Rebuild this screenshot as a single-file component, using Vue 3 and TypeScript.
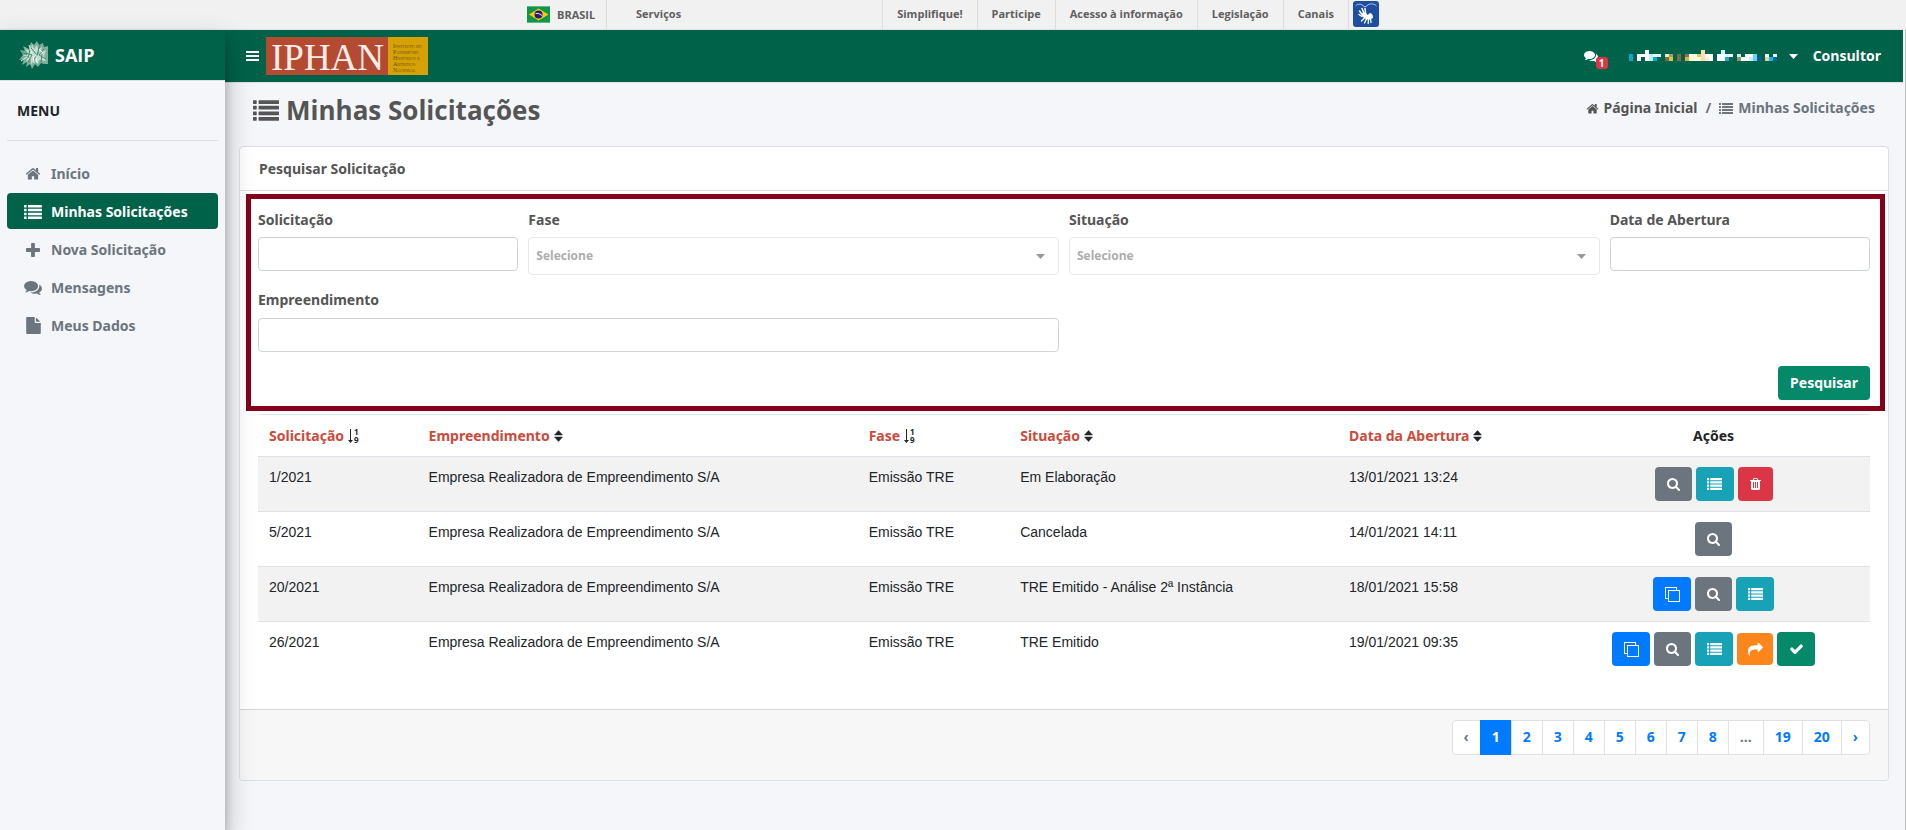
<script setup lang="ts">
import { ref } from 'vue'

type IconName = 'home' | 'list' | 'plus' | 'comments' | 'file' | 'search' | 'trash' | 'check' | 'share' | 'clone'

interface Glyph { box: string; d: string }

const bar = (y: number) => `M32 ${y}h192q32 0 32 32v192q0 32-32 32h-192q-32 0-32-32v-192q0-32 32-32zM416 ${y}h1344q32 0 32 32v192q0 32-32 32h-1344q-32 0-32-32v-192q0-32 32-32z`

const glyphs: Record<IconName, Glyph> = {
  home: { box: '-60 180 1784 1356', d: 'M1408 992v480q0 26-19 45t-45 19h-384v-384h-256v384h-384q-26 0-45-19t-19-45v-480q0-1 .5-3t.5-3l575-474 575 474q1 2 1 6zm223-69l-62 74q-8 9-21 11h-3q-13 0-21-7l-692-577-692 577q-12 8-24 7-13-2-21-11l-62-74q-8-10-7-23.5t11-21.5l719-599q32-26 76-26t76 26l244 204v-195q0-14 9-23t23-9h192q14 0 23 9t9 23v408l219 182q10 8 11 21.5t-7 23.5z' },
  list: { box: '0 128 1792 1408', d: [128, 512, 896, 1280].map(bar).join('') },
  plus: { box: '192 128 1408 1408', d: 'M1600 736v192q0 40-28 68t-68 28h-416v416q0 40-28 68t-68 28h-192q-40 0-68-28t-28-68v-416h-416q-40 0-68-28t-28-68v-192q0-40 28-68t68-28h416v-416q0-40 28-68t68-28h192q40 0 68 28t28 68v416h416q40 0 68 28t28 68z' },
  comments: { box: '0 256 1792 1408', d: 'M1408 768q0 139-94 257t-256.5 186.5-353.5 68.5q-86 0-176-16-124 88-278 128-36 9-86 16h-3q-11 0-20.5-8t-11.5-21q-1-3-1-6.5t.5-6.5 2-6l2.5-5 3.5-5.5 4-5 4.5-5 4-4.5q5-6 23-25t26-29.5 22.5-29 25-38.5 20.5-44q-124-72-195-177t-71-224q0-139 94-257t256.5-186.5 353.5-68.5 353.5 68.5 256.5 186.5 94 257zm384 256q0 120-71 224.5t-195 176.5q10 24 20.5 44t25 38.5 22.5 29 26 29.5 23 25q1 1 4 4.5t4.5 5 4 5 3.5 5.5l2.5 5 2 6 .5 6.5-1 6.5q-3 14-13 22t-22 7q-50-7-86-16-154-40-278-128-90 16-176 16-271 0-472-132 58 4 88 4 161 0 309-45t264-129q125-92 192-212t67-254q0-77-23-152 129 71 204 178t75 230z' },
  file: { box: '0 0 1536 1792', d: 'M1024 512v-472q22 14 36 28l408 408q14 14 28 36h-472zm-128 32q0 40 28 68t68 28h544v1056q0 40-28 68t-68 28h-1344q-40 0-68-28t-28-68v-1600q0-40 28-68t68-28h800v544z' },
  search: { box: '0 0 1664 1664', d: 'M1152 704q0-185-131.5-316.5t-316.5-131.5-316.5 131.5-131.5 316.5 131.5 316.5 316.5 131.5 316.5-131.5 131.5-316.5zm512 832q0 52-38 90t-90 38q-54 0-90-38l-343-342q-179 124-399 124-143 0-273.5-55.5t-225-150-150-225-55.5-273.5 55.5-273.5 150-225 225-150 273.5-55.5 273.5 55.5 225 150 150 225 55.5 273.5q0 220-124 399l343 343q37 37 37 90z' },
  trash: { box: '192 128 1408 1536', d: 'M704 1376v-704q0-14-9-23t-23-9h-64q-14 0-23 9t-9 23v704q0 14 9 23t23 9h64q14 0 23-9t9-23zm256 0v-704q0-14-9-23t-23-9h-64q-14 0-23 9t-9 23v704q0 14 9 23t23 9h64q14 0 23-9t9-23zm256 0v-704q0-14-9-23t-23-9h-64q-14 0-23 9t-9 23v704q0 14 9 23t23 9h64q14 0 23-9t9-23zm-544-992h448l-48-117q-7-9-17-11h-317q-10 2-17 11zm928 32v64q0 14-9 23t-23 9h-96v948q0 83-47 143.5t-113 60.5h-832q-66 0-113-58.5t-47-141.5v-952h-96q-14 0-23-9t-9-23v-64q0-14 9-23t23-9h309l70-167q15-37 54-63t79-26h320q40 0 79 26t54 63l70 167h309q14 0 23 9t9 23z' },
  check: { box: '120 300 1552 1190', d: 'M1671 566q0 40-28 68l-724 724-136 136q-28 28-68 28t-68-28l-136-136-362-362q-28-28-28-68t28-68l136-136q28-28 68-28t68 28l294 295 656-657q28-28 68-28t68 28l136 136q28 28 28 68z' },
  share: { box: '0 128 1792 1536', d: 'M1792 640q0 26-19 45l-512 512q-19 19-45 19t-45-19-19-45v-256h-224q-98 0-175.5 6t-154 21.5-133 42.5-105.5 69.5-80 101-48.5 138.5-17.5 181q0 55 5 123 0 6 2.5 23.5t2.5 26.5q0 15-8.5 25t-23.5 10q-16 0-28-17-7-9-13-22t-13.5-30-10.5-24q-127-285-127-451 0-199 53-333 162-403 875-403h224v-256q0-26 19-45t45-19 45 19l512 512q19 19 19 45z' },
  clone: { box: '0 0 15 15', d: 'M0 0h12v3h3v12h-12v-3h-3zM1 1v10h2v-8h8v-2zM4 4v10h10v-10z' },
}

const menu: { label: string; icon: IconName; active?: boolean }[] = [
  { label: 'Início', icon: 'home' },
  { label: 'Minhas Solicitações', icon: 'list', active: true },
  { label: 'Nova Solicitação', icon: 'plus' },
  { label: 'Mensagens', icon: 'comments' },
  { label: 'Meus Dados', icon: 'file' },
]

const govLinks = ['Simplifique!', 'Participe', 'Acesso à informação', 'Legislação', 'Canais']

type Order = 'numeric' | 'both'
const columns: { label: string; order: Order; key: string }[] = [
  { label: 'Solicitação', order: 'numeric', key: 'c-id' },
  { label: 'Empreendimento', order: 'both', key: 'c-emp' },
  { label: 'Fase', order: 'numeric', key: 'c-fase' },
  { label: 'Situação', order: 'both', key: 'c-sit' },
  { label: 'Data da Abertura', order: 'both', key: 'c-data' },
]

type Action = 'copiar' | 'ver' | 'listar' | 'excluir' | 'encaminhar' | 'confirmar'
const actions: Record<Action, { icon: IconName; label: string }> = {
  copiar: { icon: 'clone', label: 'Copiar' },
  ver: { icon: 'search', label: 'Visualizar' },
  listar: { icon: 'list', label: 'Detalhar' },
  excluir: { icon: 'trash', label: 'Excluir' },
  encaminhar: { icon: 'share', label: 'Encaminhar' },
  confirmar: { icon: 'check', label: 'Confirmar' },
}

const rows: { id: string; sit: string; data: string; acts: Action[] }[] = [
  { id: '1/2021', sit: 'Em Elaboração', data: '13/01/2021 13:24', acts: ['ver', 'listar', 'excluir'] },
  { id: '5/2021', sit: 'Cancelada', data: '14/01/2021 14:11', acts: ['ver'] },
  { id: '20/2021', sit: 'TRE Emitido - Análise 2ª Instância', data: '18/01/2021 15:58', acts: ['copiar', 'ver', 'listar'] },
  { id: '26/2021', sit: 'TRE Emitido', data: '19/01/2021 09:35', acts: ['copiar', 'ver', 'listar', 'encaminhar', 'confirmar'] },
]

const pages = ['‹', '1', '2', '3', '4', '5', '6', '7', '8', '...', '19', '20', '›']
const page = ref('1')
const solicitacao = ref('')
const fase = ref('')
const situacao = ref('')
const abertura = ref('')
const empreendimento = ref('')

// Mosaic that hides the user name: [column, row, colour], each tile 4px wide.
const mosaic: [number, number, string][] = [
  [0, 1, '#0aa5d2'], [0, 2, '#0aa5d2'],
  [2, 1, '#ffffff'], [2, 2, '#ffffff'], [3, 1, '#ffffff'], [4, 0, '#ffffff'], [4, 1, '#ffffff'], [4, 2, '#ffffff'],
  [5, 1, '#b9f1fb'], [5, 2, '#b9f1fb'], [6, 1, '#e2fbff'], [6, 2, '#0aa5d2'], [7, 1, '#dff3ee'],
  [9, 1, '#dfe9e4'], [9, 2, '#7c6a45'], [10, 1, '#b49a45'], [10, 2, '#d8c34a'],
  [12, 1, '#7c6a4c'], [12, 2, '#7c6a4c'],
  [14, 1, '#9b6b45'], [14, 2, '#d9b14c'], [15, 1, '#ffffff'], [15, 2, '#fdf9d8'], [16, 1, '#fdf9d8'], [16, 2, '#fdf9d8'],
  [17, 1, '#d9c778'], [17, 2, '#fffbe0'], [18, 0, '#fcdcae'], [18, 1, '#fcdcae'], [18, 2, '#fcdcae'],
  [19, 1, '#ffffff'], [19, 2, '#fdebcb'], [20, 1, '#ffffff'], [20, 2, '#ffffff'],
  [22, 1, '#ffffff'], [22, 2, '#ffffff'], [23, 0, '#c9f5fd'], [23, 1, '#ffffff'], [23, 2, '#ffffff'],
  [24, 1, '#d2f6fc'], [24, 2, '#1ba9d0'], [25, 1, '#ffffff'],
  [27, 1, '#dff0ea'], [27, 2, '#8b9a68'], [28, 2, '#ffffff'], [29, 1, '#ffffff'], [29, 2, '#ffffff'], [30, 1, '#ffffff'], [30, 2, '#c4f3fb'],
  [31, 1, '#6cd0f3'], [31, 2, '#6cd0f3'], [32, 2, '#0a609b'],
  [34, 1, '#ffffff'], [34, 2, '#eccf9c'], [35, 2, '#0fc0dc'], [36, 1, '#e4fbff'], [36, 2, '#0a609b'],
]
</script>

<template>
  <div class="page">
    <div class="gov">
      <nav class="gov-inner" aria-label="Barra do governo">
        <a class="gov-brasil" href="#">
          <svg viewBox="0 0 23 17" width="23" height="17" aria-hidden="true">
            <rect width="23" height="17" fill="#119548" />
            <rect width="23" height="1" fill="#5cba83" />
            <rect y="16" width="23" height="1" fill="#5cba83" />
            <path d="M2 8.500L11.500 2.500L21.500 8.500L11.500 14.500z" fill="#f8cb0b" />
            <circle cx="11.500" cy="8.500" r="4" fill="#2b1b79" />
            <path d="M8.500 7.400Q12 6.800 15 9.500" stroke="#dfe3f5" fill="none" />
          </svg>
          BRASIL
        </a>
        <a class="gov-serv" href="#">Serviços</a>
        <a v-for="l in govLinks" :key="l" class="gov-link" href="#">{{ l }}</a>
        <a class="gov-libras" href="#" aria-label="VLibras">
          <svg viewBox="0 0 26 26" width="26" height="26" aria-hidden="true">
            <rect width="26" height="26" rx="3" fill="#1d4f9e" />
            <path d="M2.500 5Q4 2.500 8 3.200L12 6L16 3.200Q21 2 23.500 5" fill="none" stroke="#a8c4ea" stroke-width="1" />
            <path d="M9.500 14L6.500 10M11 12.500L9 7.500M12.500 12L12 7.500M9 15.500L6 13.500" stroke="#fff" stroke-width="1.500" stroke-linecap="round" />
            <path d="M9 12Q13 10.500 14.500 14L17 12Q20 12.500 20 17L18 18Q15 20 11 17Q8.500 15 9 12z" fill="#fff" />
            <path d="M11.500 17L8.500 20M13.500 18L11.500 22M15.500 18.500L15.200 22.500M17.500 17.500L18 21.500" stroke="#fff" stroke-width="1.300" stroke-linecap="round" />
          </svg>
        </a>
      </nav>
    </div>

    <div class="shell">
      <aside class="side">
        <a class="brand" href="#">
          <svg viewBox="0 0 30 28" width="30" height="28" aria-hidden="true">
            <path d="M12 1L15 4L18 0L20 4L24 2L25 6L29 5V23L25 23L22 22L19 26L16 23L13 28L11 23L7 26L8 21L3 24L5 18L0 19L4 14L1 9L6 10L4 5L10 8z" fill="#7fae9d" />
            <path d="M13 3L15 8L18 4L19 9L23 6L22 11L27 9L25 15L27 20L20 19L19 23L15 19L12 24L12 18L7 21L9 15L4 15L9 12L6 8L12 10z" fill="#c6dcd3" />
            <path d="M12 7L17 13M21 4L17 17M25 8L20 14L27 18M6 12L13 14L9 21M14 20L20 11M23 13L22 21M3 11L8 14M11 9L9 17" stroke="#3f8a70" stroke-width="1" fill="none" />
            <path d="M2 20L8 16M10 4L13 12M17 14L18 22M20 8L24 12M14 15L15 22" stroke="#eef6f2" stroke-width="1" fill="none" />
          </svg>
          SAIP
        </a>
        <h2 class="side-title">MENU</h2>
        <nav class="side-nav" aria-label="Menu">
          <a v-for="m in menu" :key="m.label" href="#" :class="['side-link', { active: m.active }]">
            <span class="side-ico">
              <svg :class="'m-' + m.icon" :viewBox="glyphs[m.icon].box" aria-hidden="true"><path :d="glyphs[m.icon].d" fill="currentColor" /></svg>
            </span>
            {{ m.label }}
          </a>
        </nav>
      </aside>

      <div class="main">
        <header class="top">
          <button class="burger" type="button" aria-label="Alternar menu">
            <svg viewBox="0 0 13 10" width="13" height="10" aria-hidden="true"><path d="M0 0h13v2H0zM0 4h13v2H0zM0 8h13v2H0z" fill="currentColor" /></svg>
          </button>
          <svg viewBox="0 -5 162 48" width="162" height="48" role="img" aria-label="IPHAN">
            <rect width="122" height="38" fill="#b44a32" />
            <rect x="122" width="40" height="38" fill="#d5a106" />
            <text x="5" y="33" class="iphan-big">IPHAN</text>
            <g class="iphan-small">
              <text x="127" y="11">Instituto do</text>
              <text x="127" y="17">Patrimônio</text>
              <text x="127" y="23">Histórico e</text>
              <text x="127" y="29">Artístico</text>
              <text x="127" y="35">Nacional</text>
            </g>
          </svg>
          <div class="top-right">
            <a class="msgs" href="#" aria-label="Mensagens">
              <svg :viewBox="glyphs.comments.box" width="14" height="11" aria-hidden="true"><path :d="glyphs.comments.d" fill="currentColor" /></svg>
              <span class="badge">1</span>
            </a>
            <button class="user" type="button" aria-label="Usuário">
              <svg viewBox="0 0 152 13" width="152" height="13" shape-rendering="crispEdges" aria-hidden="true">
                <rect v-for="(t, i) in mosaic" :key="i" :x="t[0] * 4" :y="[0, 4, 7][t[1]]" width="4" :height="[4, 3, 4][t[1]]" :fill="t[2]" />
              </svg>
              <svg viewBox="0 0 9 5" width="9" height="5" aria-hidden="true"><path d="M0 0h9L4.500 5z" fill="currentColor" /></svg>
            </button>
            <span class="role">Consultor</span>
          </div>
        </header>

        <div class="heading">
          <h1>
            <svg :viewBox="glyphs.list.box" width="26" height="21" aria-hidden="true"><path :d="glyphs.list.d" fill="currentColor" /></svg>
            Minhas Solicitações
          </h1>
          <nav class="crumbs" aria-label="Trilha">
            <a href="#"><svg :viewBox="glyphs.home.box" width="13" height="11" aria-hidden="true"><path :d="glyphs.home.d" fill="currentColor" /></svg>Página Inicial</a>
            <span class="slash">/</span>
            <span class="here"><svg :viewBox="glyphs.list.box" width="14" height="11" aria-hidden="true"><path :d="glyphs.list.d" fill="currentColor" /></svg>Minhas Solicitações</span>
          </nav>
        </div>

        <section class="card">
          <h3 class="card-head">Pesquisar Solicitação</h3>
          <form class="search" @submit.prevent>
            <div class="f2"><label for="sol">Solicitação</label><input id="sol" v-model="solicitacao" type="text"></div>
            <div class="f4">
              <label for="fase">Fase</label>
              <span class="sel">
                <select id="fase" v-model="fase"><option value="">Selecione</option><option>Emissão TRE</option></select>
                <svg viewBox="0 0 9 5" width="9" height="5" aria-hidden="true"><path d="M0 0h9L4.500 5z" fill="currentColor" /></svg>
              </span>
            </div>
            <div class="f4">
              <label for="sit">Situação</label>
              <span class="sel">
                <select id="sit" v-model="situacao"><option value="">Selecione</option><option v-for="r in rows" :key="r.sit">{{ r.sit }}</option></select>
                <svg viewBox="0 0 9 5" width="9" height="5" aria-hidden="true"><path d="M0 0h9L4.500 5z" fill="currentColor" /></svg>
              </span>
            </div>
            <div class="f2"><label for="abe">Data de Abertura</label><input id="abe" v-model="abertura" type="text"></div>
            <div class="f6"><label for="emp">Empreendimento</label><input id="emp" v-model="empreendimento" type="text"></div>
            <div class="f12"><button class="go" type="submit">Pesquisar</button></div>
          </form>

          <div class="table-wrap">
            <table>
              <thead>
                <tr>
                  <th v-for="c in columns" :key="c.key" :class="c.key" scope="col">
                    <span class="th-in">
                      <a href="#">{{ c.label }}</a>
                      <svg v-if="c.order === 'both'" viewBox="0 0 9 12" width="9" height="12" aria-hidden="true">
                        <path d="M4.500 0.500L8.500 5H0.500zM4.500 11.500L8.500 7H0.500z" fill="currentColor" stroke="currentColor" stroke-linejoin="round" stroke-width="0.500" />
                      </svg>
                      <svg v-else class="num" viewBox="0 0 13 20" width="13" height="20" aria-hidden="true">
                        <path d="M2 3h1v11h2L2.500 17L0 14H2z" fill="currentColor" />
                        <text x="6" y="9">1</text>
                        <text x="6" y="17">9</text>
                      </svg>
                    </span>
                  </th>
                  <th class="c-act" scope="col">Ações</th>
                </tr>
              </thead>
              <tbody>
                <tr v-for="r in rows" :key="r.id">
                  <td>{{ r.id }}</td>
                  <td>Empresa Realizadora de Empreendimento S/A</td>
                  <td>Emissão TRE</td>
                  <td>{{ r.sit }}</td>
                  <td>{{ r.data }}</td>
                  <td>
                    <div class="acts">
                      <button v-for="a in r.acts" :key="a" type="button" :class="['act', a]" :aria-label="actions[a].label">
                        <svg :viewBox="glyphs[actions[a].icon].box" aria-hidden="true"><path :d="glyphs[actions[a].icon].d" fill="currentColor" fill-rule="evenodd" /></svg>
                      </button>
                    </div>
                  </td>
                </tr>
              </tbody>
            </table>
          </div>

          <footer class="card-foot">
            <nav class="pager" aria-label="Paginação">
              <button v-for="p in pages" :key="p" type="button" :class="{ on: p === page, off: p === '‹' || p === '...' }" @click="page = p">{{ p }}</button>
            </nav>
          </footer>
        </section>
      </div>
    </div>
  </div>
</template>

<style>
body { margin: 0; background: #f4f6f9; }
</style>

<style scoped>
*, *::before, *::after { box-sizing: border-box; }
.page {
  min-height: 100vh; display: flex; flex-direction: column;
  background: #f4f6f9; color: #212529;
  font: 700 14px/20px "Open Sans", "Noto Sans", sans-serif;
}
a { color: inherit; text-decoration: none; }
button, input, select { font: inherit; margin: 0; }
svg { display: block; flex: none; }
h1, h2, h3 { margin: 0; font: inherit; }

.gov { height: 30px; background: #f1f1f1; border-bottom: 1px solid #dde3e0; color: #606060; font-size: 11px; }
.gov-inner { width: 852px; height: 29px; margin: 0 auto; display: flex; align-items: stretch; line-height: 28px; }
.gov-brasil { width: 80px; display: flex; align-items: center; gap: 7px; border-right: 1px solid #dcdcdc; }
.gov-serv { flex: 1; padding-left: 29px; }
.gov-link { padding: 0 14px; border-left: 1px solid #dcdcdc; white-space: nowrap; }
.gov-libras { padding: 1px 0 0 4px; border-left: 1px solid #dcdcdc; }

.shell { flex: 1; display: flex; align-items: stretch; }
.side { width: 225px; flex: none; background: #f4f6f9; box-shadow: 0 14px 28px rgba(0, 0, 0, .25), 0 10px 10px rgba(0, 0, 0, .22); z-index: 2; }
.brand { height: 51px; padding-left: 19px; display: flex; align-items: center; gap: 6px; background: #01624a; border-bottom: 1px solid #dee2e6; color: #fff; font-size: 18px; }
.side-title, .side-link, .crumbs, .card-head, .search label, th { font-family: "Noto Sans", "Open Sans", sans-serif; font-weight: 700; }
.side-title { margin: 0 7px 14px; padding: 20px 10px 19px; border-bottom: 1px solid #dcdfe2; color: #212529; }
.side-nav { display: flex; flex-direction: column; gap: 2px; padding: 0 7px; }
.side-link { height: 36px; padding-top: 1px; display: flex; align-items: center; border-radius: 4px; color: #6c757d; }
.side-link.active { background: #01624a; color: #fff; }
.side-ico { width: 36px; margin-left: 8px; display: flex; justify-content: center; }
.m-home { width: 16px; height: 13px; }
.m-list { width: 18px; height: 14px; }
.m-plus { width: 14px; height: 14px; }
.m-comments { width: 18px; height: 14px; }
.m-file { width: 15px; height: 17px; }

.main { flex: 1; min-width: 0; padding-bottom: 48px; border-right: 1px solid #bdbdbd; }
.top { height: 53px; margin-right: 2px; display: flex; align-items: center; background: #01624a; border-bottom: 1px solid #dee2e6; color: #fff; }
.burger { width: 41px; padding: 0 0 0 21px; border: 0; background: none; color: #fff; }
.iphan-big { font: 400 37px "Liberation Serif", serif; fill: #fbeee8; }
.iphan-small { font: 400 6px "Liberation Serif", serif; font-variant: small-caps; fill: #6e5212; }
.top-right { margin-left: auto; padding-right: 22px; display: flex; align-items: center; }
.msgs { position: relative; margin-right: 31px; }
.badge { position: absolute; left: 12px; top: 6px; width: 12px; height: 12px; border-radius: 3px; background: #dc3545; font-size: 10px; line-height: 12px; text-align: center; }
.user { display: flex; align-items: center; gap: 8px; padding: 0; margin-right: 15px; border: 0; background: none; color: #fff; }

.heading { display: flex; justify-content: space-between; padding: 8px 30px 17px 28px; }
.heading h1 { display: flex; align-items: center; gap: 7px; font-size: 26px; line-height: 38px; color: #555; }
.crumbs { display: flex; align-items: center; height: 34px; color: #6c757d; }
.crumbs a, .here { display: flex; align-items: center; gap: 5px; }
.crumbs a { color: #555; }
.slash { padding: 0 8px; }

.card { margin: 0 16px 0 14px; border: 1px solid #dcdfde; border-radius: 4px; background: #fff; }
.card-head { height: 44px; padding: 12px 19px 0; border-bottom: 1px solid #dcdfde; color: #555; }
.search { display: grid; grid-template-columns: repeat(12, 1fr); column-gap: 10px; margin: 3px 3px 0 6px; padding: 11px 10px 6px 7px; border: 5px solid #85001a; color: #555; }
.search label { display: block; margin-bottom: 7px; }
.f2 { grid-column: span 2; }
.f4 { grid-column: span 4; }
.f6 { grid-column: span 6; margin-top: 15px; }
.f6 label { margin-bottom: 8px; }
.f12 { grid-column: span 12; display: flex; justify-content: flex-end; margin-top: 14px; }
.f2, .f4 { height: 65px; }
input { display: block; width: 100%; height: 34px; padding: 0 8px; border: 1px solid #ced4da; border-radius: 4px; background: #fff; color: #495057; }
.sel { display: flex; align-items: center; height: 38px; border: 1px solid #e8e8e8; border-radius: 4px; color: #999; }
.sel select { flex: 1; height: 36px; padding: 0 7px; border: 0; border-radius: 4px; background: none; color: #adadad; font-size: 12px; appearance: none; }
.sel svg { margin-right: 13px; }
.go { height: 34px; padding: 0 12px; border: 0; border-radius: 4px; background: #058968; color: #fff; font-family: "Noto Sans", "Open Sans", sans-serif; }

.table-wrap { padding: 3px 18px 32px; }
table { width: 100%; border-collapse: collapse; table-layout: fixed; }
th { height: 42px; padding: 1px 11px 0; border-top: 1px solid #dee2e6; text-align: left; white-space: nowrap; }
.th-in { display: flex; align-items: center; gap: 4px; }
th a { color: #cb4b3c; }
.num text { font: 700 8px "Open Sans", sans-serif; fill: currentColor; }
.c-id { width: 9.9%; }
.c-emp { width: 27.3%; }
.c-fase { width: 9.4%; }
.c-sit { width: 20.4%; }
.c-data { width: 13.6%; }
.c-act { width: 19.4%; text-align: center; }
td { height: 55px; padding: 10px 11px 0; border-top: 1px solid #dee2e6; vertical-align: top; font-family: "Liberation Sans", Arial, sans-serif; font-weight: 400; }
tbody tr:nth-child(odd) { background: #f2f2f2; }
.acts { display: flex; justify-content: center; align-items: center; gap: 4px; height: 34px; }
.act { width: 38px; height: 34px; display: grid; place-items: center; padding: 0; border: 0; border-radius: 4px; color: #fff; }
.act.ver { width: 37px; background: #6c757d; }
.act.copiar { background: #007bff; }
.act.listar { background: #17a2b8; }
.act.excluir { width: 35px; background: #dc3545; }
.act.encaminhar { width: 36px; height: 32px; background: #fd861c; }
.act.confirmar { background: #058968; }
.act svg { width: 15px; height: 15px; }
.ver svg { width: 13px; height: 13px; }
.listar svg { height: 12px; }
.excluir svg { width: 11px; height: 12px; }
.encaminhar svg { height: 13px; }
.confirmar svg { width: 13px; height: 10px; }

.card-foot { display: flex; justify-content: flex-end; padding: 10px 18px 25px; border-top: 1px solid #d5d8d8; border-radius: 0 0 4px 4px; background: #f7f7f7; }
.pager { display: flex; }
.pager button { height: 35px; margin-left: -1px; padding: 0 11px; border: 1px solid #dee2e6; background: #fff; color: #007bff; }
.pager button:first-child { border-radius: 4px 0 0 4px; }
.pager button:last-child { border-radius: 0 4px 4px 0; }
.pager .off { color: #6c757d; }
.pager .on { background: #007bff; border-color: #007bff; color: #fff; }
</style>
